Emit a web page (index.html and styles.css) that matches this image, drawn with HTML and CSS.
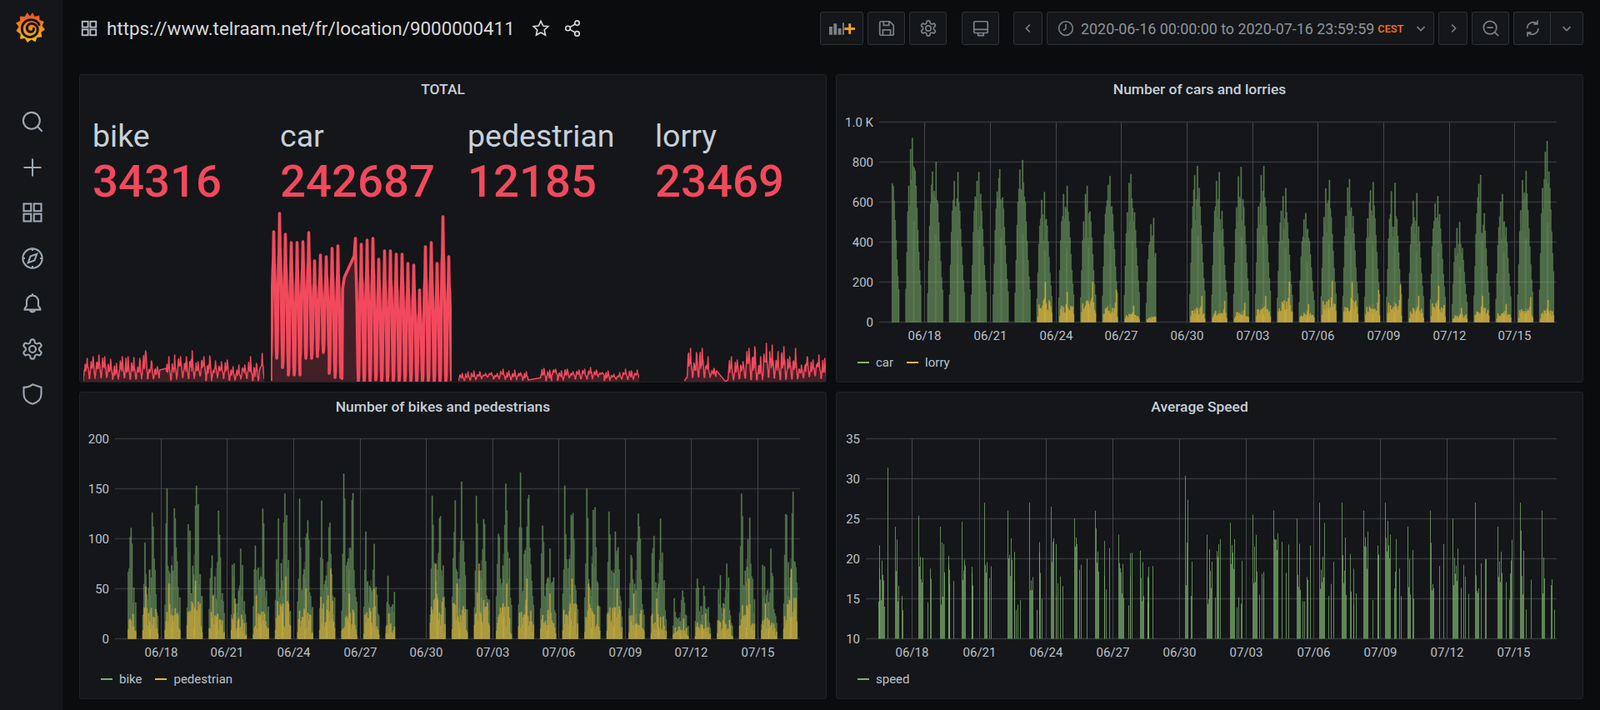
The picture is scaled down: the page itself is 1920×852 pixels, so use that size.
FILE: index.html
```html
<!DOCTYPE html>
<html lang="en">
  <head>
    <meta charset="UTF-8" />
    <meta name="viewport" content="width=device-width, initial-scale=1.0" />
    <title>https://www.telraam.net/fr/location/9000000411 - Grafana</title>
    <link rel="stylesheet" href="styles.css">
  </head>
  <body>
    <svg class="icon-defs" aria-hidden="true">
      <defs>
        <linearGradient id="logo-grad" x1="0" y1="0" x2="0" y2="1">
          <stop offset="0" stop-color="#f0502a" />
          <stop offset="1" stop-color="#fcc010" />
        </linearGradient>
        <symbol id="i-apps" viewBox="0 0 24 24">
          <rect x="3" y="3" width="7.5" height="7.5" />
          <rect x="13.5" y="3" width="7.5" height="7.5" />
          <rect x="3" y="13.5" width="7.5" height="7.5" />
          <rect x="13.5" y="13.5" width="7.5" height="7.5" />
        </symbol>
        <symbol id="i-gear" viewBox="0 0 24 24">
          <path d="M12.22 2h-.44a2 2 0 0 0-2 2v.18a2 2 0 0 1-1 1.73l-.43.25a2 2 0 0 1-2 0l-.15-.08a2 2 0 0 0-2.73.73l-.22.38a2 2 0 0 0 .73 2.73l.15.1a2 2 0 0 1 1 1.72v.51a2 2 0 0 1-1 1.74l-.15.09a2 2 0 0 0-.73 2.73l.22.38a2 2 0 0 0 2.73.73l.15-.08a2 2 0 0 1 2 0l.43.25a2 2 0 0 1 1 1.73V20a2 2 0 0 0 2 2h.44a2 2 0 0 0 2-2v-.18a2 2 0 0 1 1-1.73l.43-.25a2 2 0 0 1 2 0l.15.08a2 2 0 0 0 2.73-.73l.22-.39a2 2 0 0 0-.73-2.73l-.15-.08a2 2 0 0 1-1-1.74v-.5a2 2 0 0 1 1-1.74l.15-.09a2 2 0 0 0 .73-2.73l-.22-.38a2 2 0 0 0-2.73-.73l-.15.08a2 2 0 0 1-2 0l-.43-.25a2 2 0 0 1-1-1.73V4a2 2 0 0 0-2-2z" />
          <circle cx="12" cy="12" r="3.4" />
        </symbol>
        <symbol id="i-chevron" viewBox="0 0 24 24">
          <path d="M6 9.5l6 6 6-6" />
        </symbol>
      </defs>
    </svg>

    <div class="app">
      <nav class="sidebar">
        <svg class="logo" viewBox="0 0 36 38">
          <path fill="url(#logo-grad)" d="M21 1l2.6 5 5.6-1.6.3 5.7 5.4 1.8-2.4 5.1 3.5 4.5-4.6 3.2.8 5.7-5.7.4-2 5.4-5-2.7-4.6 3.4-3-4.8-5.7.6.4-5.7L1.5 23l3-4.9L1 13.6l5.2-2.5-.3-5.7 5.7.6L14.6 1l3.4 4.4z" />
          <path class="logo-swirl" d="M29 15.5C26.5 9.5 17 7.5 11.8 12.5 6.5 17.5 7.5 26 13.5 29.3 19.5 32.3 27.3 28.3 27.3 21.5 27.3 15.5 20.3 12.5 16.3 15.5 13 18.5 14.3 23.7 18.3 24.3 21 24.6 23 22.5 22.5 20.3" />
        </svg>
        <ul class="side-icons">
          <li>
            <svg class="side-icon" viewBox="0 0 24 24"><circle cx="11" cy="11" r="8.5" /><path d="M17.2 17.2L22 22" /></svg>
          </li>
          <li>
            <svg class="side-icon" viewBox="0 0 24 24"><path d="M12 3v18M3 12h18" /></svg>
          </li>
          <li>
            <svg class="side-icon"><use href="#i-apps" /></svg>
          </li>
          <li>
            <svg class="side-icon" viewBox="0 0 24 24"><circle cx="12" cy="12" r="10" /><path d="M12 2v2.2M12 19.8V22M2 12h2.2M19.8 12H22M16.5 7.5l-2.4 6.6-6.6 2.4 2.4-6.6z" /></svg>
          </li>
          <li>
            <svg class="side-icon" viewBox="0 0 24 24"><path d="M12 2v2M12 4c-3.6 0-6 2.8-6 6v4.5l-2 3v1h16v-1l-2-3V10c0-3.2-2.4-6-6-6zM9.5 18.5c0 3.2 5 3.2 5 0" /></svg>
          </li>
          <li>
            <svg class="side-icon"><use href="#i-gear" /></svg>
          </li>
          <li>
            <svg class="side-icon" viewBox="0 0 24 24"><path d="M12 2l9 3v7c0 5-3.6 8.4-9 10-5.4-1.6-9-5-9-10V5c4 0 6.500-1 9-3z" /></svg>
          </li>
        </ul>
      </nav>

      <main class="main">
        <header class="topbar">
          <svg class="title-icon"><use href="#i-apps" /></svg>
          <span class="dash-title">https://www.telraam.net/fr/location/9000000411</span>
          <svg class="title-action" viewBox="0 0 24 24"><path d="M12 2.500l2.900 6.200 6.700.8-5 4.600 1.400 6.700L12 17.400l-6 3.400 1.400-6.700-5-4.600 6.700-.8z" /></svg>
          <svg class="title-action" viewBox="0 0 24 24"><circle cx="18" cy="5" r="3" /><circle cx="6" cy="12" r="3" /><circle cx="18" cy="19" r="3" /><path d="M8.600 10.500l6.800-4M8.600 13.500l6.800 4" /></svg>

          <div class="toolbar">
            <button class="btn btn-add">
              <svg class="add-icon" viewBox="0 0 32 16">
                <path class="bars" d="M0 6h4v10H0zM5.500 2h4v14h-4zM11 8h4v8h-4zM16.500 1h2v15h-2z" />
                <path class="plus" d="M24 2h3v5h5v3h-5v5h-3v-5h-5V7h5z" />
              </svg>
            </button>
            <button class="btn">
              <svg class="btn-icon" viewBox="0 0 24 24"><path d="M5 3h11l5 5v11a2 2 0 0 1-2 2H5a2 2 0 0 1-2-2V5a2 2 0 0 1 2-2zM8 3v5h7V3M7 21v-7h10v7" /></svg>
            </button>
            <button class="btn">
              <svg class="btn-icon"><use href="#i-gear" /></svg>
            </button>
            <button class="btn btn-cycle">
              <svg class="btn-icon" viewBox="0 0 24 24"><path d="M5 3h14a2 2 0 0 1 2 2v11a2 2 0 0 1-2 2H5a2 2 0 0 1-2-2V5a2 2 0 0 1 2-2zM3 13.500h18M8.500 18v3.500h7V18" /></svg>
            </button>
            <div class="time-group">
              <button class="btn btn-nav">
                <svg class="chev-icon chev-left"><use href="#i-chevron" /></svg>
              </button>
              <button class="btn btn-range">
                <svg class="clock-icon" viewBox="0 0 24 24"><circle cx="12" cy="12" r="10" /><path d="M12 6v6.500l-3.500 2.500" /></svg>
                <span class="range-text">2020-06-16 00:00:00 to 2020-07-16 23:59:59</span>
                <span class="range-tz">CEST</span>
                <svg class="chev-icon"><use href="#i-chevron" /></svg>
              </button>
              <button class="btn btn-nav">
                <svg class="chev-icon chev-right"><use href="#i-chevron" /></svg>
              </button>
              <button class="btn">
                <svg class="btn-icon" viewBox="0 0 24 24"><circle cx="11" cy="11" r="8.500" /><path d="M17.200 17.200L22 22M7 11h8" /></svg>
              </button>
              <div class="btn-split">
                <button class="btn btn-refresh">
                  <svg class="btn-icon" viewBox="0 0 24 24"><path d="M5 12a8 8 0 0 1 13-6.200M19.500 12A8 8 0 0 1 6.500 18.200M18.500 1.500v5h-5M5.500 22.500v-5h5" /></svg>
                </button>
                <button class="btn btn-drop">
                  <svg class="chev-icon"><use href="#i-chevron" /></svg>
                </button>
              </div>
            </div>
          </div>
        </header>

        <div class="dashboard">
          <section class="panel">
            <h2 class="panel-title">TOTAL</h2>
            <div class="stats">
              <div class="stat">
                <div class="stat-label">bike</div>
                <div class="stat-value">34316</div>
                <svg class="spark" id="spark-bike"></svg>
              </div>
              <div class="stat">
                <div class="stat-label">car</div>
                <div class="stat-value">242687</div>
                <svg class="spark" id="spark-car"></svg>
              </div>
              <div class="stat">
                <div class="stat-label">pedestrian</div>
                <div class="stat-value">12185</div>
                <svg class="spark" id="spark-pedestrian"></svg>
              </div>
              <div class="stat">
                <div class="stat-label">lorry</div>
                <div class="stat-value">23469</div>
                <svg class="spark" id="spark-lorry"></svg>
              </div>
            </div>
          </section>

          <section class="panel">
            <h2 class="panel-title">Number of cars and lorries</h2>
            <svg class="chart" id="chart-cars"></svg>
            <div class="legend">
              <span class="legend-item"><i class="swatch swatch-green"></i>car</span>
              <span class="legend-item"><i class="swatch swatch-yellow"></i>lorry</span>
            </div>
          </section>

          <section class="panel">
            <h2 class="panel-title">Number of bikes and pedestrians</h2>
            <svg class="chart" id="chart-bikes"></svg>
            <div class="legend">
              <span class="legend-item"><i class="swatch swatch-green"></i>bike</span>
              <span class="legend-item"><i class="swatch swatch-yellow"></i>pedestrian</span>
            </div>
          </section>

          <section class="panel">
            <h2 class="panel-title">Average Speed</h2>
            <svg class="chart" id="chart-speed"></svg>
            <div class="legend">
              <span class="legend-item"><i class="swatch swatch-green"></i>speed</span>
            </div>
          </section>
        </div>
      </main>
    </div>
    <script src="charts.js"></script>
  </body>
</html>
```

FILE: styles.css
```css
* {
  box-sizing: border-box;
}
html,
body {
  margin: 0;
  height: 100%;
  overflow: hidden;
}
body {
  background: #0b0c0e;
  color: #c7d0d9;
  font-family: Roboto, "Liberation Sans", sans-serif;
}
.icon-defs {
  position: absolute;
  width: 0;
  height: 0;
}
.app {
  display: flex;
  height: 852px;
}

/* sidebar */
.sidebar {
  flex: 0 0 75px;
  background: #141619;
  display: flex;
  flex-direction: column;
  align-items: center;
}
.logo {
  width: 36px;
  height: 38px;
  margin-top: 14px;
  margin-right: 3px;
}
.logo-swirl {
  fill: none;
  stroke: #141619;
  stroke-width: 3;
  stroke-linecap: round;
}
.side-icons {
  list-style: none;
  margin: 80px 0 0;
  padding: 0 0 0 3px;
  display: flex;
  flex-direction: column;
  gap: 26.500px;
}
.side-icons li {
  height: 28px;
}
.side-icon {
  display: block;
  width: 28px;
  height: 28px;
  fill: none;
  stroke: #9fa7b3;
  stroke-width: 1.8;
}

/* top bar */
.main {
  flex: 1;
  min-width: 0;
  display: flex;
  flex-direction: column;
  padding: 0 20px;
}
.topbar {
  display: flex;
  align-items: center;
  height: 89px;
  padding-bottom: 35px;
  padding-top: 14px;
}
.title-icon {
  width: 22px;
  height: 22px;
  fill: none;
  stroke: #b9c0cb;
  stroke-width: 2;
  margin-left: 1px;
  margin-right: 10px;
}
.dash-title {
  font-size: 22.400px;
  color: #d8d9da;
  margin-right: 20px;
  white-space: nowrap;
}
.title-action {
  width: 22px;
  height: 22px;
  fill: none;
  stroke: #d8d9da;
  stroke-width: 1.8;
  margin-right: 16px;
}
.toolbar {
  margin-left: auto;
  display: flex;
  gap: 5px;
}
.time-group {
  display: flex;
  gap: 5px;
  margin-left: 12px;
}
.btn {
  height: 40px;
  width: 45px;
  background: #141619;
  border: 1px solid #2c3235;
  border-radius: 3px;
  padding: 0;
  display: flex;
  align-items: center;
  justify-content: center;
  color: #7b8087;
  font-family: inherit;
}
.btn-add {
  width: 52px;
}
.add-icon {
  width: 31px;
  height: 16px;
}
.add-icon .bars {
  fill: #7b8087;
}
.add-icon .plus {
  fill: #ff9830;
}
.btn-icon {
  width: 22px;
  height: 22px;
  fill: none;
  stroke: #7b8087;
  stroke-width: 1.9;
}
.btn-cycle {
  margin-left: 13px;
}
.btn-nav {
  width: 35px;
}
.chev-icon {
  width: 18px;
  height: 18px;
  fill: none;
  stroke: #7b8087;
  stroke-width: 2.2;
}
.chev-left {
  transform: rotate(90deg);
}
.chev-right {
  transform: rotate(-90deg);
}
.btn-range {
  width: 465px;
  padding: 0 6px 0 12px;
  justify-content: flex-start;
}
.clock-icon {
  width: 20px;
  height: 20px;
  fill: none;
  stroke: #7b8087;
  stroke-width: 1.9;
  margin-right: 8px;
}
.range-text {
  font-size: 17.900px;
  color: #8e949b;
  white-space: nowrap;
}
.range-tz {
  font-size: 12.800px;
  font-weight: 500;
  color: #ff780a;
  margin-left: 4px;
  margin-right: auto;
}
.btn-split {
  display: flex;
}
.btn-refresh {
  width: 44px;
  border-radius: 3px 0 0 3px;
  border-right: none;
}
.btn-drop {
  width: 40px;
  border-radius: 0 3px 3px 0;
}

/* panels */
.dashboard {
  display: grid;
  grid-template-columns: 897px 897px;
  grid-template-rows: 370px 369px;
  gap: 11px;
}
.panel {
  background: #141619;
  border: 1px solid #202226;
  border-radius: 3px;
  display: flex;
  flex-direction: column;
  overflow: hidden;
}
.panel-title {
  margin: 0;
  height: 37px;
  line-height: 35px;
  padding-right: 24px;
  text-align: center;
  font-size: 17.400px;
  font-weight: 500;
  color: #c7d0d9;
}
.chart {
  display: block;
  width: 100%;
  height: 285px;
  flex: none;
}
.chart text {
  font-family: Roboto, "Liberation Sans", sans-serif;
  font-size: 15px;
  fill: #bcc1c8;
}
.legend {
  display: flex;
  align-items: center;
  height: 46px;
  padding-left: 25px;
  gap: 16px;
  font-size: 15px;
  color: #bcc1c8;
}
.legend-item {
  display: flex;
  align-items: center;
}
.swatch {
  width: 14px;
  height: 2px;
  margin-right: 8px;
}
.swatch-green {
  background: #7eb26d;
}
.swatch-yellow {
  background: #eab839;
}

/* TOTAL panel */
.stats {
  flex: 1;
  min-height: 0;
  display: grid;
  grid-template-columns: repeat(4, 217px);
  column-gap: 8px;
  padding: 15px 0 0 4px;
}
.stat {
  display: flex;
  flex-direction: column;
  min-height: 0;
}
.stat-label {
  padding-left: 11px;
  font-size: 37.500px;
  line-height: 42px;
  color: #c7d0d9;
}
.stat-value {
  padding-left: 11px;
  margin-top: 6px;
  margin-bottom: 1px;
  font-size: 54.500px;
  font-weight: 500;
  line-height: 54px;
  color: #f2495c;
  white-space: nowrap;
}
.spark {
  display: block;
  width: 217px;
  flex: 1;
  min-height: 0;
}
.spark-line {
  fill: none;
  stroke: #f2495c;
  stroke-linejoin: round;
}
.spark-fill {
  fill: #f2495c;
  fill-opacity: 0.2;
}
```

FILE: charts.js
```js
const NS = "http://www.w3.org/2000/svg";
const GREEN = "#7eb26d";
const YELLOW = "#eab839";
const TICKS = ["06/18", "06/21", "06/24", "06/27", "06/30", "07/03", "07/06", "07/09", "07/12", "07/15"];

// daily peaks, index 0 is 06/16 and 13 (06/29) has no data
const carPeaks = [820, 920, 800, 750, 750, 765, 810, 650, 680, 680, 730, 740, 520, null, 780, 750, 775, 780, 670, 545, 710, 715, 700, 695, 645, 630, 500, 735, 640, 755, 905];
const lorryPeaks = [null, null, null, null, null, null, null, 200, 150, 200, 160, 80, 50, null, 130, 105, 95, 130, 200, 90, 205, 200, 160, 185, 130, 180, 70, 130, 90, 125, 110];
const bikePeaks = [127, 126, 150, 153, 128, 90, 130, 145, 140, 138, 165, 107, 63, null, 143, 157, 143, 155, 166, 113, 153, 150, 127, 125, 120, 48, 60, 75, 145, 90, 147];
const pedPeaks = [40, 52, 55, 58, 43, 40, 43, 62, 50, 70, 45, 50, 25, null, 75, 55, 75, 55, 60, 45, 60, 55, 50, 45, 40, 20, 25, 30, 60, 35, 70];
const speedPeaks = [21, 24, 25.4, 24, 24.6, 27, 26, 27, 26.5, 25, 26, 23, 21, null, 30.4, 23, 24.5, 25.5, 26, 25, 27, 27, 26, 27, 24, 26, 25, 27, 24, 27, 26];

function rng(seed) {
  let s = seed;
  return function () {
    s = (s + 0x6d2b79f5) | 0;
    let t = Math.imul(s ^ (s >>> 15), 1 | s);
    t = (t + Math.imul(t ^ (t >>> 7), 61 | t)) ^ t;
    return ((t ^ (t >>> 14)) >>> 0) / 4294967296;
  };
}

function add(parent, name, attrs, text) {
  const node = document.createElementNS(NS, name);
  for (const key in attrs) node.setAttribute(key, attrs[key]);
  if (text) node.textContent = text;
  parent.appendChild(node);
  return node;
}

// hourly fractions of the day's peak
function carDay(r) {
  const mid = [];
  for (let i = 0; i < 7; i++) mid.push(r() < 0.3 ? 0.6 + 0.1 * r() : 0.76 + 0.1 * r());
  mid[1 + Math.floor(r() * 2)] = 0.94;
  mid[3 + Math.floor(r() * 3)] = 1;
  return { start: 5, values: [0.18, 0.38, 0.6, 0.74, ...mid, 0.74, 0.62, 0.5, 0.38, 0.28, 0.2] };
}

function lorryDay(r) {
  const values = [];
  const peak = 8 + Math.floor(r() * 7);
  for (let i = 0; i < 16; i++) {
    const edge = i < 1 || i > 14 ? 0.5 : 1;
    values.push(edge * (0.25 + 0.3 * r()));
  }
  values[peak] = 1;
  values[peak - 1] = 0.6;
  return { start: 6, values };
}

function bikeDay(r) {
  const values = [];
  for (let h = 6; h < 23; h++) {
    let env = 0.55;
    if (h >= 7 && h <= 9) env = 0.85;
    if (h >= 15 && h <= 18) env = 0.9;
    if (h < 7 || h > 20) env = 0.3;
    values.push(env * (0.5 + 0.5 * r()));
  }
  values[r() < 0.5 ? 2 : 10] = 1;
  values[r() < 0.5 ? 3 : 11] = 0.8 + 0.1 * r();
  return { start: 6, values };
}

function pedDay(r) {
  const values = [];
  for (let h = 6; h < 23; h++) {
    const env = h < 7 || h > 20 ? 0.25 : 0.65;
    values.push(env * (0.25 + 0.75 * r()));
  }
  values[3 + Math.floor(r() * 10)] = 1;
  return { start: 6, values };
}

function drawHourly(g, peaks, dayFn, seed, color, opacity, sc) {
  const r = rng(seed);
  peaks.forEach(function (peak, day) {
    if (peak === null) return;
    const shape = dayFn(r);
    let d = "";
    let from = shape.start;
    let to = shape.start + shape.values.length;
    if (day === 0) from = 14;
    if (day === 12) to = 16;
    if (day === 30) to = Math.min(to, 21);
    for (let h = from; h < to; h++) {
      const y = sc.y(sc.min + (peak - sc.min) * shape.values[h - shape.start]);
      const x1 = sc.x(day + h / 24).toFixed(1);
      const x2 = sc.x(day + (h + 1) / 24).toFixed(1);
      d += (d ? "L" : "M") + x1 + " " + y.toFixed(1) + "L" + x2 + " " + y.toFixed(1);
    }
    const base = sc.y(sc.min).toFixed(1);
    const x0 = sc.x(day + from / 24).toFixed(1);
    const x9 = sc.x(day + to / 24).toFixed(1);
    add(g, "path", { d: "M" + x0 + " " + base + d.replace(/^M/, "L") + "L" + x9 + " " + base + "Z", fill: color, "fill-opacity": opacity, stroke: color, "stroke-opacity": 0.45, "stroke-width": 0.7 });
    // lighter band in the middle of the day
    const w = sc.x(1 / 12) - sc.x(0);
    const band = sc.x(day + 13 / 24);
    if (day > 0 && day !== 12) {
      add(g, "rect", { x: band.toFixed(1), y: sc.y(sc.min + (peak - sc.min) * 0.55).toFixed(1), width: w.toFixed(1), height: (sc.y(sc.min) - sc.y(sc.min + (peak - sc.min) * 0.55)).toFixed(1), fill: color, "fill-opacity": 0.2 });
    }
  });
}

function drawSpeed(g, sc) {
  const r = rng(77);
  const spike = function (t, v) {
    const x = Math.round(sc.x(t)) + 0.5;
    add(g, "line", { x1: x, x2: x, y1: sc.y(10), y2: sc.y(v).toFixed(1), stroke: GREEN, "stroke-width": 1, "stroke-opacity": 0.72 });
  };
  speedPeaks.forEach(function (peak, day) {
    if (peak === null) return;
    const start = 7 + r() * 1.5;
    const dense = 4 + Math.floor(r() * 4);
    if (day === 0) {
      [0.6, 0.63, 0.66, 0.7].forEach(function (t) { spike(t, 14 + 7 * r()); });
      spike(0.96, 31.4);
    } else {
      for (let i = 0; i < dense; i++) {
        const frac = i === 0 ? 1 : 0.3 + 0.6 * r();
        spike(day + (start + i * 0.9) / 24, 10 + (peak - 10) * frac);
      }
    }
    const sparse = 2 + Math.floor(r() * 4);
    for (let i = 0; i < sparse; i++) {
      const h = start + dense + 1 + r() * 9;
      spike(day + h / 24, 13.5 + 9 * r());
    }
  });
}

function drawChart(id, cfg) {
  const svg = document.getElementById(id);
  const sc = {
    min: cfg.min,
    x: function (t) { return cfg.left + (t / 31) * (cfg.right - cfg.left); },
    y: function (v) { return cfg.bottom - ((v - cfg.min) / (cfg.max - cfg.min)) * (cfg.bottom - cfg.top); },
  };
  cfg.yTicks.forEach(function (tick) {
    const y = Math.round(sc.y(tick[0]) - 0.5) + 0.5;
    add(svg, "line", { x1: cfg.left, x2: cfg.right, y1: y, y2: y, stroke: "#34363a", "stroke-width": 1.4 });
    add(svg, "text", { x: cfg.left - 7, y: y + 5, "text-anchor": "end" }, tick[1]);
  });
  TICKS.forEach(function (label, i) {
    const x = Math.round(sc.x(2.07 + i * 3)) + 0.5;
    add(svg, "line", { x1: x, x2: x, y1: cfg.top, y2: cfg.bottom, stroke: "#44464a" });
    add(svg, "text", { x: x, y: cfg.bottom + 21, "text-anchor": "middle" }, label);
  });
  cfg.draw(add(svg, "g", {}), sc);
}

const VALUE_TICKS = [[0, "0"], [200, "200"], [400, "400"], [600, "600"], [800, "800"], [1000, "1.0 K"]];

drawChart("chart-cars", {
  left: 51, right: 864, top: 19.5, bottom: 259.5, min: 0, max: 1000, yTicks: VALUE_TICKS,
  draw: function (g, sc) {
    drawHourly(g, carPeaks, carDay, 11, GREEN, 0.55, sc);
    drawHourly(g, lorryPeaks, lorryDay, 23, YELLOW, 0.68, sc);
  },
});
drawChart("chart-bikes", {
  left: 42, right: 864, top: 18.5, bottom: 258.5, min: 0, max: 200,
  yTicks: [[0, "0"], [50, "50"], [100, "100"], [150, "150"], [200, "200"]],
  draw: function (g, sc) {
    drawHourly(g, bikePeaks, bikeDay, 5, GREEN, 0.55, sc);
    drawHourly(g, pedPeaks, pedDay, 9, YELLOW, 0.6, sc);
  },
});
drawChart("chart-speed", {
  left: 35, right: 864, top: 18.5, bottom: 258.5, min: 10, max: 35,
  yTicks: [[10, "10"], [15, "15"], [20, "20"], [25, "25"], [30, "30"], [35, "35"]],
  draw: drawSpeed,
});

// sparklines of the TOTAL panel: heights in px from the bottom edge.
// bridge is the straight stretch where the data has a hole.
function drawSpark(id, opts) {
  const svg = document.getElementById(id);
  const box = svg.getBoundingClientRect();
  const H = box.height;
  const r = rng(opts.seed);
  const dayW = box.width / 31;
  const hours = [0, 2, 4, 6, 8, 10, 12, 14, 16, 18, 20, 22, 24];
  const shape = opts.shape;
  const pts = [];
  let skip = 0;
  opts.peaks.forEach(function (peak, day) {
    const bridge = opts.bridge && opts.bridge[day];
    if (bridge) {
      bridge.pts.forEach(function (p) {
        pts.push(p[0] * dayW + " " + (H - p[1]).toFixed(1));
      });
      skip = bridge.skip;
    }
    if (peak === null) return;
    const low = opts.troughs ? opts.troughs[day] || r() * 3 : 1 + r() * 7;
    hours.forEach(function (h, i) {
      if (h < skip) return;
      const wobble = 1 - opts.wobble * r();
      const jitter = i > 2 && i < 11 && shape[i] < 1 ? wobble : 1;
      const v = low + (peak - low) * shape[i] * jitter;
      pts.push((day + h / 24) * dayW + " " + (H - v).toFixed(1));
    });
    skip = 0;
  });
  const first = (opts.flatUntil || 0) * dayW;
  const line = "M" + first + " " + (H - 1) + "L" + pts.join("L");
  const fill = "M" + first + " " + H + "L" + pts.join("L") + "L" + box.width + " " + H + "Z";
  add(svg, "path", { d: fill, class: "spark-fill" });
  add(svg, "path", { d: line, class: "spark-line", "stroke-width": opts.width });
}

const TAPER = [0, 0.04, 0.22, 0.55, 0.72, 0.8, 1, 0.82, 0.74, 0.58, 0.34, 0.1, 0];
const COMMUTE = [0, 0, 0.3, 0.8, 0.95, 0.6, 0.7, 0.65, 1, 0.9, 0.6, 0.2, 0];

drawSpark("spark-car", {
  peaks: [180, 202, 177, 167, 167, 168, 179, 145, 152, 150, 160, 163, null, null, 172, 165, 170, 172, 147, 157, 157, 153, 153, 142, 140, 110, 162, 167, 142, 198, 150],
  troughs: [28, 28, 17, 8, 8, 28, 28, 30, 35, 35, 10, 5],
  bridge: { 12: { pts: [[12.2, 4], [12.3, 111], [12.6, 125], [14.3, 151]], skip: 12 } },
  shape: TAPER, seed: 31, width: 3.6, wobble: 0.08,
});
drawSpark("spark-bike", {
  peaks: [28, 30, 32, 30, 27, 22, 30, 30, 29, 28, 37, 25, 18, null, 30, 32, 30, 30, 37, 24, 30, 31, 25, 24, 26, 18, 20, 20, 30, 22, 34],
  bridge: { 13: { pts: [[13.1, 14], [14.2, 16]], skip: 6 } },
  shape: COMMUTE, seed: 41, width: 1.5, wobble: 0.6,
});
drawSpark("spark-pedestrian", {
  peaks: [10, 12, 13, 12, 10, 11, 10, 15, 13, 14, 11, 12, null, null, 16, 14, 15, 13, 15, 12, 14, 15, 17, 14, 11, 13, 9, 11, 15, 13, 14],
  shape: COMMUTE, seed: 51, width: 1.5, wobble: 0.6,
});
drawSpark("spark-lorry", {
  peaks: [null, null, null, null, null, null, null, 40, 35, 40, 30, 16, null, null, 30, 26, 24, 40, 42, 30, 46, 44, 36, 42, 30, 40, 20, 30, 26, 32, 28],
  bridge: { 12: { pts: [[12.1, 13], [13.7, 0]], skip: 0 } },
  flatUntil: 6.6, shape: COMMUTE, seed: 61, width: 1.5, wobble: 0.6,
});
```
